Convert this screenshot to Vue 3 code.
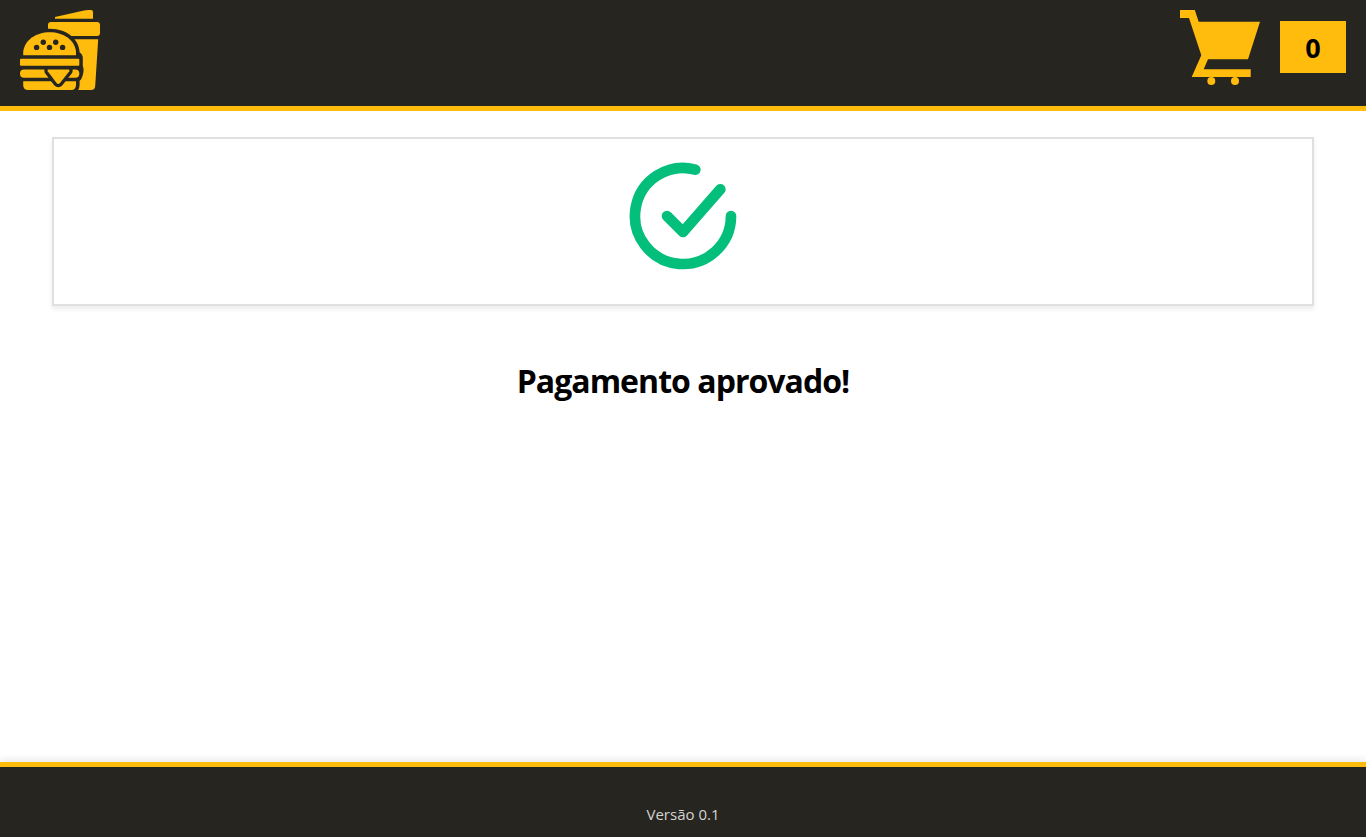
<script setup>
const cartCount = 0
const seeds = [[16.6, 37.4], [23.3, 32.3], [29.5, 37.4], [35.7, 32.3], [42.6, 37.4]]
</script>

<template>
  <div class="page">
    <header class="header">
      <svg class="logo" viewBox="0 0 80 80" aria-label="Lanchonete">
        <g class="fill">
          <path d="M35 8.7V7L64 .4Q66 0 68 0H71Q73 0 73 2V8.7Z" />
          <path d="M28 26V15Q28 12 31 12H77Q80 12 80 15V23Q80 26 77 26Z" />
          <path d="M48 29.3H78.2L75.2 76Q75 80 71 80H48Z" />
        </g>
        <path class="gap" d="M0 45.5C0 29 13 18.7 30 18.7C48 18.7 59.3 30 59.7 42.5Q62.8 44.5 62.8 48V56Q64.5 60 62.5 66Q61.8 69 59.6 71V75Q59.4 78 58 80.5H0Z" />
        <g class="fill">
          <path d="M3.2 45.2V42C4.5 30 16 22.3 29.7 22.3C43.5 22.3 55 30 56 42V45.2Z" />
          <rect x="0" y="48.8" width="59.3" height="7" rx="1" />
          <rect x="0" y="59.4" width="59.3" height="8.4" rx="4" />
          <path d="M3.2 71.2H56V75Q56 80 51 80H8.2Q3.2 80 3.2 75Z" />
        </g>
        <path class="cheese" d="M27.7 59.4H49.3V61.2L40 73Q38.3 74.8 36.6 73L27.7 61.2Z" />
        <circle v-for="([x, y], i) in seeds" :key="i" class="gap" :cx="x" :cy="y" r="2.7" />
      </svg>
      <div class="cart">
        <svg class="cart-icon" viewBox="0 0 80 80" aria-label="Carrinho">
          <path class="fill" d="M0 0H14.8L18.7 11.7H80L68 49.3H28L23.7 59.3H70.7V67H11.7L21.3 45.3L9 8H0Z" />
          <circle class="fill" cx="31.3" cy="71.1" r="4" />
          <circle class="fill" cx="55" cy="71.1" r="4" />
        </svg>
        <span class="count">{{ cartCount }}</span>
      </div>
    </header>

    <main class="content">
      <section class="card">
        <svg class="check" viewBox="0 0 24 24">
          <path d="M21 12A9 9 0 1 1 14.3 3.3M9 12L12 15L19 7" />
        </svg>
      </section>
      <h1 class="title">Pagamento aprovado!</h1>
    </main>

    <footer class="footer"><span class="version">Versão 0.1</span></footer>
  </div>
</template>

<style>
body {
  margin: 0;
}
</style>

<style scoped>
.page {
  display: flex;
  flex-direction: column;
  height: 837px;
  overflow: hidden;
  background: #fff;
  font-family: "Segoe UI", "Open Sans", "Noto Sans", sans-serif;
}
.header {
  box-sizing: border-box;
  height: 111px;
  padding: 10px 20px;
  display: flex;
  justify-content: space-between;
  align-items: flex-start;
  background: #272520;
  border-bottom: 5px solid #ffbc0d;
}
.logo,
.cart-icon {
  display: block;
  width: 80px;
  height: 80px;
}
.fill {
  fill: #ffbc0d;
}
.gap {
  fill: #272520;
}
.cheese {
  fill: #ffbc0d;
  stroke: #272520;
  stroke-width: 6.6;
  stroke-linejoin: round;
  paint-order: stroke;
}
.cart {
  display: flex;
  gap: 20px;
}
.count {
  width: 66px;
  height: 52px;
  margin-top: 11px;
  background: #ffbc0d;
  color: #000;
  font-size: 27px;
  font-weight: 700;
  line-height: 54px;
  text-align: center;
}
.content {
  flex: 1;
  padding: 26px 52px 0;
}
.card {
  box-sizing: border-box;
  height: 169px;
  padding-top: 13px;
  display: flex;
  justify-content: center;
  border: 2px solid #e0e0e0;
  box-shadow: 0 3px 5px rgba(0, 0, 0, 0.08);
}
.check {
  width: 128px;
  height: 128px;
  fill: none;
  stroke: #04be7c;
  stroke-width: 2;
  stroke-linecap: round;
  stroke-linejoin: round;
}
.title {
  margin: 53px 0 0;
  color: #000;
  font-size: 32px;
  font-weight: 700;
  letter-spacing: -0.96px;
  line-height: 43px;
  text-align: center;
}
.footer {
  box-sizing: border-box;
  height: 75px;
  padding-top: 37px;
  background: #272520;
  border-top: 5px solid #ffbc0d;
  box-shadow: 0 -2px 8px rgba(0, 0, 0, 0.1);
  color: #d3d3d3;
  font-size: 15px;
  line-height: 21px;
  text-align: center;
}
</style>
